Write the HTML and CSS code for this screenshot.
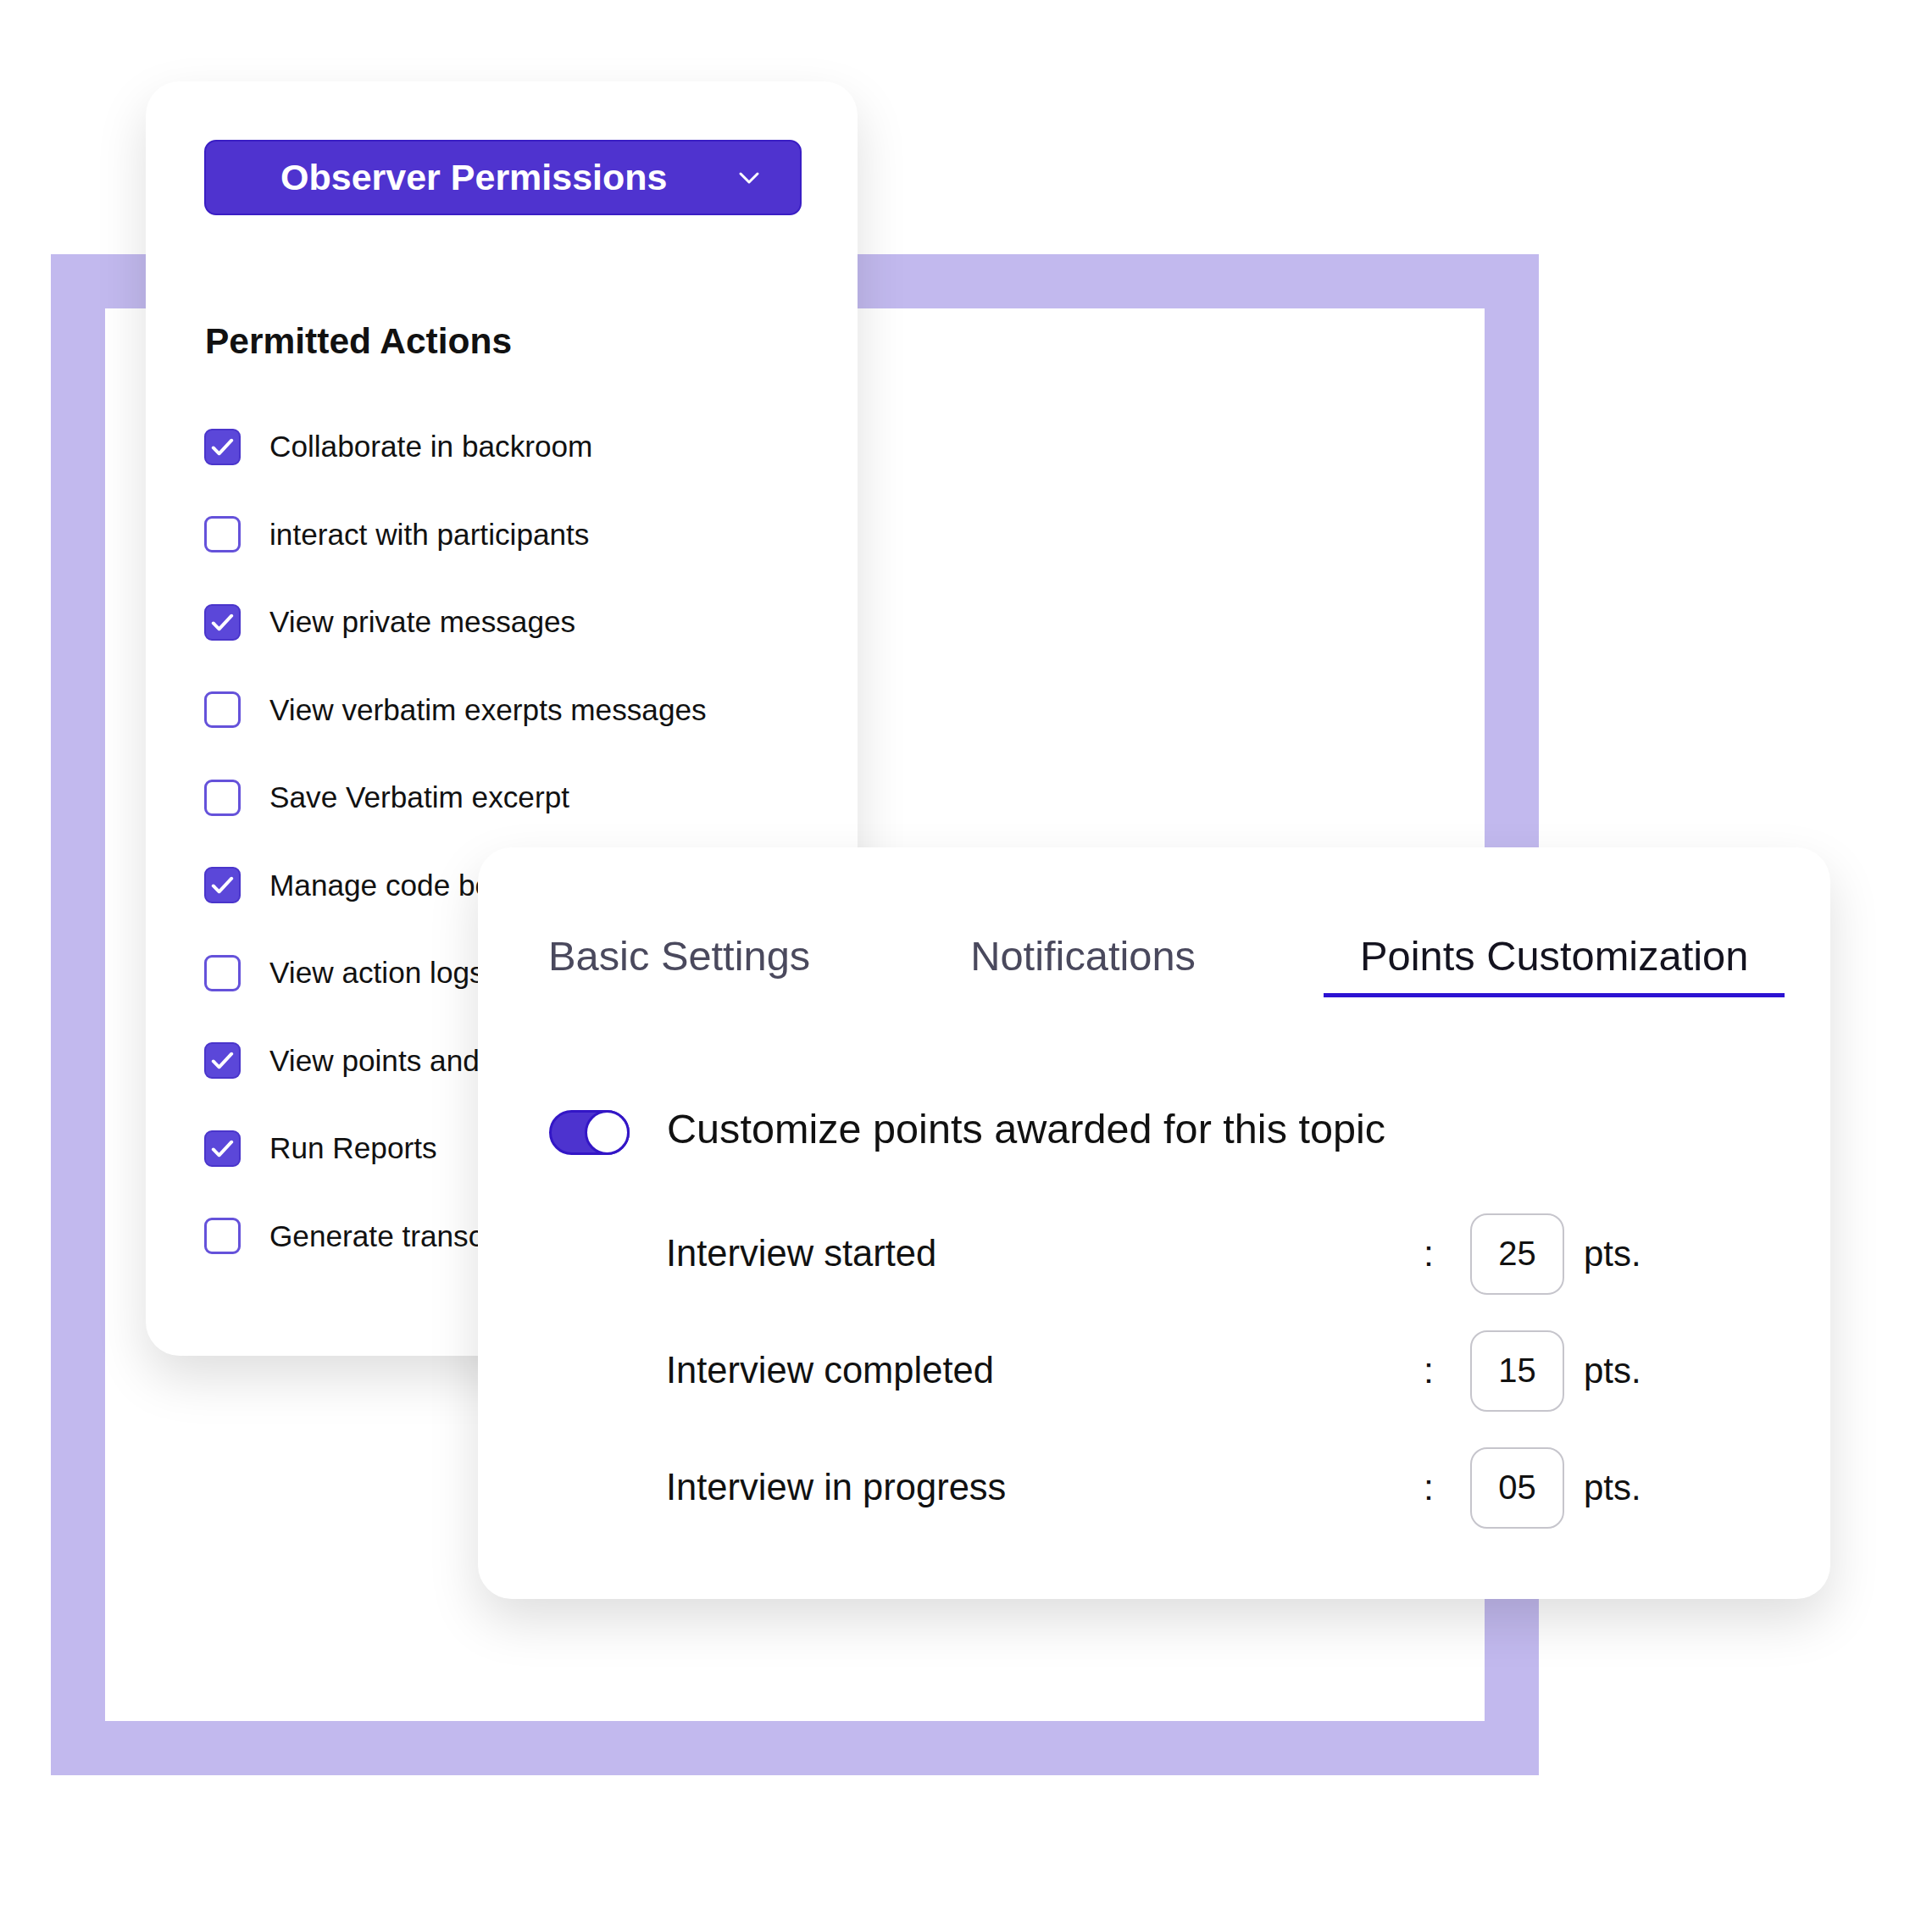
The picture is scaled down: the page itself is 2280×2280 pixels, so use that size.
FILE: index.html
```html
<!DOCTYPE html>
<html>

<head>
  <meta charset="utf-8" />
  <link rel="stylesheet" href="styles.css">
</head>

<body>
  <div class="stage">
    <div class="frame"></div>

    <!-- observer permissions -->
    <div class="card card-perm">
      <div class="select">
        <span class="select-label">Observer Permissions</span>
        <svg class="chevron" width="26" height="16" viewBox="0 0 26 16">
          <polyline points="3,3 13,13 23,3" fill="none" stroke="#fff" stroke-width="3" stroke-linecap="round" stroke-linejoin="round" />
        </svg>
      </div>
      <h3 class="perm-title">Permitted Actions</h3>
      <ul class="perm-list">
        <li><span class="check on"></span>Collaborate in backroom</li>
        <li><span class="check"></span>interact with participants</li>
        <li><span class="check on"></span>View private messages</li>
        <li><span class="check"></span>View verbatim exerpts messages</li>
        <li><span class="check"></span>Save Verbatim excerpt</li>
        <li><span class="check on"></span>Manage code book</li>
        <li><span class="check"></span>View action logs</li>
        <li><span class="check on"></span>View points and badges</li>
        <li><span class="check on"></span>Run Reports</li>
        <li><span class="check"></span>Generate transcripts</li>
      </ul>
    </div>

    <!-- points customization -->
    <div class="card card-points">
      <div class="tabs">
        <div class="tab">Basic Settings</div>
        <div class="tab">Notifications</div>
        <div class="tab active">Points Customization</div>
      </div>
      <div class="switch-row">
        <span class="switch"><span class="knob"></span></span>
        <span class="switch-label">Customize points awarded for this topic</span>
      </div>
      <div class="pt-rows">
        <div class="pt-row">
          <span class="pt-label">Interview started</span>
          <span class="pt-colon">:</span>
          <span class="pt-box">25</span>
          <span class="pt-unit">pts.</span>
        </div>
        <div class="pt-row">
          <span class="pt-label">Interview completed</span>
          <span class="pt-colon">:</span>
          <span class="pt-box">15</span>
          <span class="pt-unit">pts.</span>
        </div>
        <div class="pt-row">
          <span class="pt-label">Interview in progress</span>
          <span class="pt-colon">:</span>
          <span class="pt-box">05</span>
          <span class="pt-unit">pts.</span>
        </div>
      </div>
    </div>
  </div>
</body>
</html>
```

FILE: styles.css
```css
body {
  margin: 0;
  padding: 0;
  background-color: #fff;
  font-family: "Liberation Sans", Arial, sans-serif;
  color: #111;
}

.stage {
  position: relative;
  width: 2280px;
  height: 2280px;
  overflow: hidden;
}

.frame {
  position: absolute;
  left: 60px;
  top: 300px;
  width: 1628px;
  height: 1667px;
  border: 64px solid #c2b9ee;
}

.card {
  position: absolute;
  background-color: #fff;
  border-radius: 40px;
  box-shadow: 0 26px 60px rgba(0, 0, 0, 0.13);
  box-sizing: border-box;
}

/* left card */
.card-perm {
  left: 172px;
  top: 96px;
  width: 840px;
  height: 1504px;
  padding: 69px 66px 0 69px;
}

.select {
  display: flex;
  align-items: center;
  height: 89px;
  box-sizing: border-box;
  padding: 0 47px 0 88px;
  background-color: #4f33cf;
  border: 2px solid #3a1ec4;
  border-radius: 14px;
  color: #fff;
}

.select-label {
  font-size: 43px;
  font-weight: bold;
  line-height: 1;
}

.chevron {
  margin-left: auto;
}

.perm-title {
  margin: 128px 0 0 1px;
  font-size: 42.5px;
  line-height: 1;
  font-weight: bold;
  color: #111;
}

.perm-list {
  list-style: none;
  margin: 81px 0 0 0;
  padding: 0;
  display: flex;
  flex-direction: column;
  gap: 60.5px;
}

.perm-list li {
  display: flex;
  align-items: center;
  height: 43px;
  font-size: 35.2px;
  white-space: nowrap;
}

.check {
  flex: none;
  width: 43px;
  height: 43px;
  box-sizing: border-box;
  margin-right: 34px;
  border: 3px solid #6552da;
  border-radius: 9px;
  background-color: #fff;
}

.check.on {
  border: 2px solid #4a35cb;
  background-color: #5b47d9;
  background-image: url("data:image/svg+xml,%3Csvg xmlns='http://www.w3.org/2000/svg' viewBox='0 0 40 40'%3E%3Cpolyline points='9,21 16,28 31,12' fill='none' stroke='%23fff' stroke-width='4' stroke-linecap='round' stroke-linejoin='round'/%3E%3C/svg%3E");
  background-size: 100% 100%;
}

/* right card */
.card-points {
  left: 564px;
  top: 1000px;
  width: 1596px;
  height: 887px;
  padding: 104px 0 0 84px;
}

.tabs {
  display: flex;
  margin-left: -44px;
}

.tab {
  padding: 0 43px 19px;
  font-size: 48.8px;
  line-height: 1;
  color: #4a495d;
  border-bottom: 5px solid transparent;
}

.tab + .tab {
  margin-left: 103px;
}

.tab.active {
  margin-left: 108px;
  color: #14131f;
  border-bottom-color: #2c12d2;
}

.switch-row {
  display: flex;
  align-items: center;
  height: 53px;
  margin-top: 133px;
}

.switch {
  position: relative;
  flex: none;
  width: 95px;
  height: 53px;
  box-sizing: border-box;
  border: 3px solid #3316c6;
  border-radius: 27px;
  background-color: #4d33cf;
}

.knob {
  position: absolute;
  right: -3px;
  top: -3px;
  width: 53px;
  height: 53px;
  box-sizing: border-box;
  border: 3px solid #3316c6;
  border-radius: 50%;
  background-color: #fff;
}

.switch-label {
  margin: 0 0 9px 44px;
  font-size: 48.6px;
  line-height: 1;
  color: #111;
}

.pt-rows {
  display: flex;
  flex-direction: column;
  gap: 42px;
  margin: 69px 0 0 138px;
}

.pt-row {
  display: flex;
  align-items: center;
  height: 96px;
}

.pt-label {
  width: 894px;
  font-size: 43.5px;
  line-height: 1;
}

.pt-colon {
  width: 55px;
  font-size: 43px;
  line-height: 1;
}

.pt-box {
  display: flex;
  align-items: center;
  justify-content: center;
  width: 111px;
  height: 96px;
  box-sizing: border-box;
  border: 2.5px solid #c6c5cc;
  border-radius: 20px;
  font-size: 40px;
}

.pt-unit {
  margin-left: 23px;
  font-size: 42px;
}
```
